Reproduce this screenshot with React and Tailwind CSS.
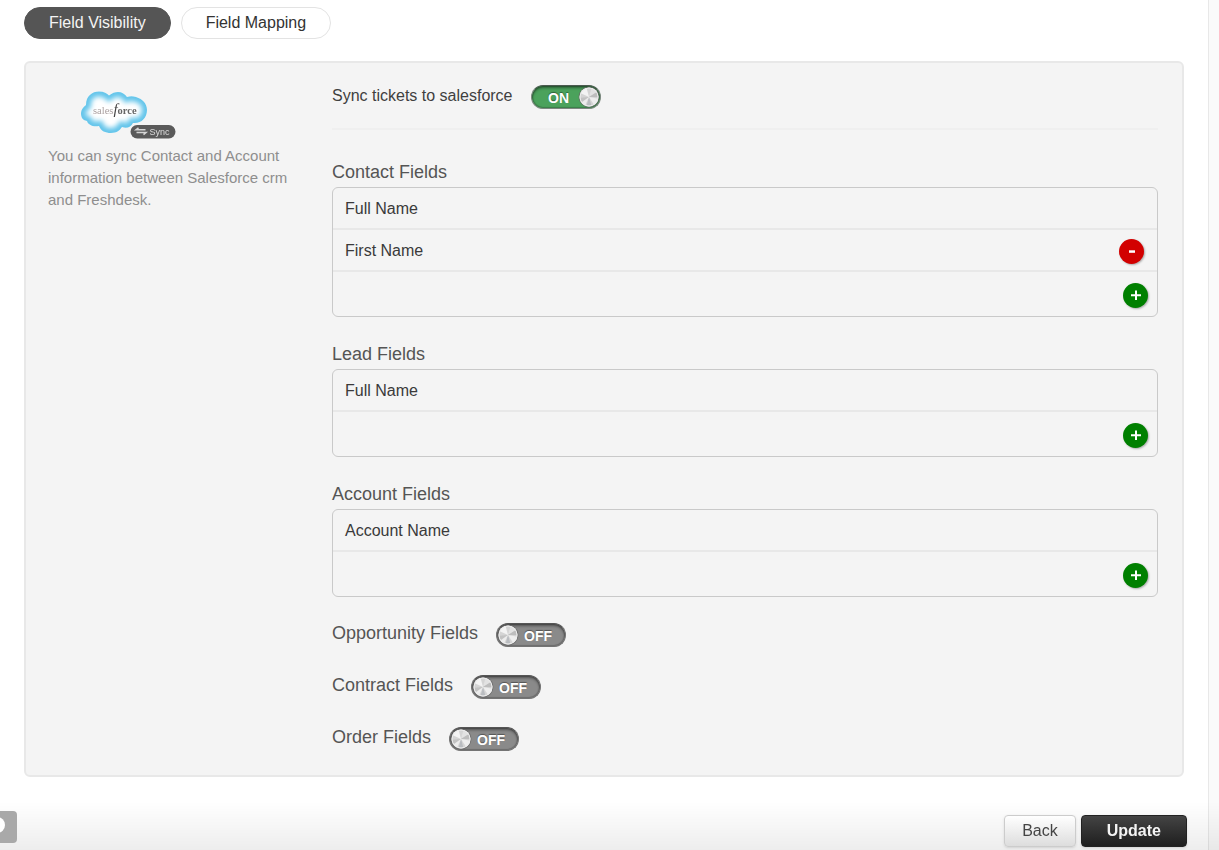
import { useState } from "react";

function Toggle({ id, defaultOn = false }) {
  const [on, setOn] = useState(defaultOn);
  return (
    <span
      className={`relative flex h-6 w-[70px] shrink-0 items-center rounded-full border shadow-[inset_0_2px_3px_rgba(0,0,0,0.4),inset_0_0_1px_1px_rgba(0,0,0,0.2)] ${
        on
          ? "flex-row-reverse border-[#7d8780] border-t-[#4c5a50] bg-[#4ba25c]"
          : "border-[#747474] border-t-[#555555] bg-[#8a8a8a]"
      }`}
    >
      <input
        id={id}
        type="checkbox"
        checked={on}
        onChange={(e) => setOn(e.target.checked)}
        className="absolute inset-0 m-0 cursor-pointer appearance-none rounded-full"
      />
      <svg viewBox="0 0 22 22" className="pointer-events-none size-[22px] shrink-0">
        <defs>
          <filter id={`${id}-brush`}>
            <feGaussianBlur stdDeviation="0.7" />
          </filter>
          <clipPath id={`${id}-knob`}>
            <circle cx="11" cy="11" r="9.5" />
          </clipPath>
        </defs>
        <circle cx="11" cy="11" r="10.5" fill="#6a6a6a" fillOpacity="0.7" />
        <g clipPath={`url(#${id}-knob)`}>
          <rect width="22" height="22" fill="#d4d4d4" />
          <g filter={`url(#${id}-brush)`}>
            <path d="M11 11 0 6V0h8Z" fill="#f3f3f3" />
            <path d="M11 11 14 0h8v4Z" fill="#e2e2e2" />
            <path d="M11 11 22 4v7Z" fill="#bdbdbd" />
            <path d="M11 11 22 13v9h-4Z" fill="#eeeeee" />
            <path d="M11 11 14 22H8Z" fill="#b9bcc0" />
            <path d="M11 11 0 12v7Z" fill="#c2c2c2" />
            <path d="M11 11 0 19v3h6Z" fill="#ececec" />
          </g>
        </g>
        <circle cx="11" cy="11" r="9" fill="none" stroke="#ededed" />
      </svg>
      <span
        className={`pointer-events-none flex-1 pt-px text-center text-sm leading-5 font-bold text-white [text-shadow:0_-1px_1px_rgba(0,0,0,0.4)] ${
          on ? "pl-2" : "pr-2"
        }`}
      >
        {on ? "ON" : "OFF"}
      </span>
    </span>
  );
}

function RoundButton({ kind, label }) {
  return (
    <button
      type="button"
      aria-label={label}
      className={`flex size-[25px] shrink-0 items-center justify-center rounded-full shadow-[1px_1px_2px_rgba(0,0,0,0.3)] ${
        kind === "add" ? "bg-[#008000]" : "bg-[#d20000]"
      }`}
    >
      <svg viewBox="0 0 12 12" className="size-3" fill="white">
        {kind === "add" ? (
          <path d="M5 1.500h2v3.700h4v2H7v3.800H5V7.200H1v-2h4Z" />
        ) : (
          <path d="M3 5.300h6v2.500H3Z" />
        )}
      </svg>
    </button>
  );
}

function FieldGroup({ title, rows }) {
  return (
    <section className="mb-[26px]">
      <h2 className="mb-1 text-lg leading-[22px] text-[#555555]">{title}</h2>
      <ul className="rounded-md border border-[#c9c9c9] text-base text-[#3a3a3a]">
        {rows.map((row) => (
          <li
            key={row.name}
            className="flex h-[42px] items-center justify-between border-b-2 border-[#e8e8e8] pt-0.5 pr-[13px] pl-3"
          >
            <span>{row.name}</span>
            {row.removable && <RoundButton kind="remove" label={`Remove ${row.name}`} />}
          </li>
        ))}
        <li className="flex h-11 items-center justify-end pt-0.5 pr-[9px]">
          <RoundButton kind="add" label={`Add to ${title}`} />
        </li>
      </ul>
    </section>
  );
}

const cloudPath =
  "M6 18C6 9 12 4.500 19 4.500c5 0 8 2 10 4 3-2.500 6-3.500 9-3.500 4 0 7 2 9 5 3-1 6-1 9 0 7 2 11 7 11 13 0 8-6 14-14 13-2 4-6 6-11 4-2 3-5 6-11 6s-10-2-12-7c-6 1-11-1-12-5C2 33 1 30 1 26c0-3 2-6 5-8Z";

function SalesforceLogo() {
  return (
    <svg viewBox="0 0 100 52" className="ml-8 h-[52px] w-[100px]" role="img" aria-label="Salesforce Sync">
      <defs>
        <filter id="glow" x="-10%" y="-10%" width="120%" height="120%">
          <feGaussianBlur stdDeviation="2.4" />
        </filter>
        <filter id="soft" x="-5%" y="-5%" width="110%" height="110%">
          <feGaussianBlur stdDeviation="0.45" />
        </filter>
        <clipPath id="cloudShape">
          <path d={cloudPath} />
        </clipPath>
      </defs>
      <g filter="url(#soft)">
        <g clipPath="url(#cloudShape)">
          <rect width="70" height="50" fill="#ffffff" />
          <path d={cloudPath} fill="none" stroke="#62c4ea" strokeWidth="10" filter="url(#glow)" />
        </g>
        <text x="13" y="27" fontFamily="Liberation Serif, serif" fontSize="10.500" fill="#aaa0a0">
          sales
          <tspan fontStyle="italic" fontSize="15" fill="#444444">
            f
          </tspan>
          <tspan fontWeight="bold" fill="#666666">
            orce
          </tspan>
        </text>
        <rect x="50.500" y="38" width="45" height="13.500" rx="6.700" fill="#5a5a5a" />
        <path
          d="M56 42.800h9.500M58.500 40.800 56 42.800h3M56.500 45.500h9.500M63.500 47.600l2.500-2.100h-3"
          fill="none"
          stroke="#d5d5d5"
          strokeWidth="1.500"
        />
        <text x="69.500" y="48" fontFamily="Liberation Sans, sans-serif" fontSize="9" fill="#dddddd">
          Sync
        </text>
      </g>
    </svg>
  );
}

const groups = [
  { title: "Contact Fields", rows: [{ name: "Full Name" }, { name: "First Name", removable: true }] },
  { title: "Lead Fields", rows: [{ name: "Full Name" }] },
  { title: "Account Fields", rows: [{ name: "Account Name" }] },
];

const switches = [
  { id: "opportunity", label: "Opportunity Fields" },
  { id: "contract", label: "Contract Fields" },
  { id: "order", label: "Order Fields" },
];

export default function App() {
  const [tab, setTab] = useState("Field Visibility");
  return (
    <div className="flex min-h-screen bg-white font-['Liberation_Sans',Arial,sans-serif]">
      <div className="pointer-events-none fixed inset-x-0 bottom-0 h-12 bg-linear-to-b from-transparent to-black/7" />
      <main className="min-w-0 flex-1 pt-[7px] pb-[3px] pl-6">
        <nav className="flex gap-2.5">
          {["Field Visibility", "Field Mapping"].map((name) => (
            <button
              key={name}
              type="button"
              onClick={() => setTab(name)}
              className={`h-8 rounded-full border px-6 text-base ${
                tab === name
                  ? "border-[#555555] bg-[#555555] text-[#f4f4f4]"
                  : "border-[#e3e3e3] bg-white text-[#333333]"
              }`}
            >
              {name}
            </button>
          ))}
        </nav>

        <div className="mt-[22px] mr-6 flex rounded-md border-2 border-[#e8e8e8] bg-[#f4f4f4] px-[22px] pt-[22px] pb-6">
          <aside className="w-[284px] shrink-0 pt-0.5">
            <SalesforceLogo />
            <p className="mt-1.5 w-[250px] text-[15px] leading-[22px] text-[#8e8e8e]">
              You can sync Contact and Account information between Salesforce crm and Freshdesk.
            </p>
          </aside>

          <div className="min-w-0 flex-1 pr-0.5">
            <div className="mb-[31px] flex items-start gap-[18px] border-b-2 border-[#efefef] pb-[19px] text-[#3f3f3f]">
              <label htmlFor="tickets" className="leading-[22px]">
                Sync tickets to salesforce
              </label>
              <Toggle id="tickets" defaultOn />
            </div>

            {groups.map((group) => (
              <FieldGroup key={group.title} {...group} />
            ))}

            <div className="flex flex-col gap-7">
              {switches.map((item) => (
                <div key={item.id} className="flex items-start gap-[18px]">
                  <label htmlFor={item.id} className="text-lg leading-5 text-[#555555]">
                    {item.label}
                  </label>
                  <Toggle id={item.id} />
                </div>
              ))}
            </div>
          </div>
        </div>

        <div className="relative mt-[38px] mr-[21px] flex justify-end gap-[5px]">
          <button
            type="button"
            className="h-8 rounded border border-[#cccccc] bg-linear-to-b from-white to-[#dddddd] px-[17px] text-base text-[#444444] shadow-sm"
          >
            Back
          </button>
          <button
            type="button"
            className="h-8 rounded border border-[#222222] bg-linear-to-b from-[#444444] to-[#1f1f1f] px-[25px] text-base font-bold text-[#f4f4f4] shadow-sm"
          >
            Update
          </button>
        </div>
      </main>
      <div className="w-[11px] shrink-0 border-l border-[#e8e8e8] bg-[#fafafa]" />

      <button
        type="button"
        aria-label="Help"
        className="fixed bottom-[7px] left-0 flex h-8 w-[17px] items-center rounded-r bg-[#a9a9a9]"
      >
        <svg viewBox="0 0 17 32" className="h-8 w-[17px]">
          <circle cx="-3" cy="14" r="8" fill="white" />
        </svg>
      </button>
    </div>
  );
}
